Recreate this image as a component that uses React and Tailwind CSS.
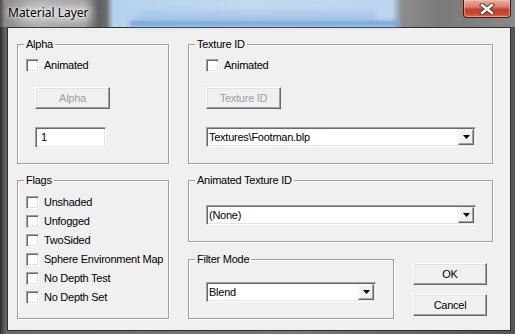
import React from "react";

const Check = ({ label }) => (
  <div className="flex items-center h-[13px] gap-[5px]">
    <span className="w-[13px] h-[13px] shrink-0 bg-white border border-t-[#a0a0a0] border-l-[#a0a0a0] border-b-white border-r-white shadow-[inset_1px_1px_0_#696969,inset_-1px_-1px_0_#e3e3e3]" />
    <span className="leading-[13px] text-black whitespace-nowrap">{label}</span>
  </div>
);

const Button = ({ children, disabled, className }) => (
  <div
    className={
      "flex items-center justify-center bg-[#f0f0f0] border border-t-white border-l-white border-b-[#696969] border-r-[#696969] shadow-[inset_-1px_-1px_0_#a0a0a0,inset_1px_1px_0_#e3e3e3] leading-[13px] whitespace-nowrap " +
      (disabled ? "text-[#a0a0a0] " : "text-black ") +
      className
    }
  >
    {children}
  </div>
);

const Combo = ({ text, className }) => (
  <div
    className={
      "flex items-center bg-white p-[1px] border border-t-[#a0a0a0] border-l-[#a0a0a0] border-b-white border-r-white shadow-[inset_1px_1px_0_#696969,inset_-1px_-1px_0_#e3e3e3] " +
      className
    }
  >
    <span className="flex-1 pl-[1px] leading-[13px] text-black whitespace-nowrap">{text}</span>
    <span className="w-[16px] h-[16px] shrink-0 flex items-center justify-center bg-[#f0f0f0] border border-t-[#f0f0f0] border-l-[#f0f0f0] border-b-[#696969] border-r-[#696969] shadow-[inset_-1px_-1px_0_#a0a0a0,inset_1px_1px_0_#fff]">
      <svg width="7" height="4" viewBox="0 0 7 4">
        <polygon points="0,0 7,0 3.5,4" fill="#000" />
      </svg>
    </span>
  </div>
);

const Group = ({ title, className, children }) => (
  <div
    className={
      "relative border border-[#a0a0a0] shadow-[inset_1px_1px_0_#fff,1px_1px_0_#fff] " +
      className
    }
  >
    <span className="absolute -top-[7px] left-[6px] px-[2px] bg-[#f0f0f0] leading-[13px] text-black whitespace-nowrap">
      {title}
    </span>
    {children}
  </div>
);

export default function App() {
  return (
    <div className="w-[515px] h-[334px] overflow-hidden flex flex-col bg-[linear-gradient(90deg,#2a2a2a_0px,#5a5a5a_4px,#6a6a6a_7px,#777_300px,#555_515px)] font-['Liberation_Sans',Arial,sans-serif] text-[11px] tracking-[-0.25px]">
      {/* Title bar */}
      <div className="relative h-[27px] shrink-0 flex items-start bg-[linear-gradient(90deg,#4a4a4a_0px,#8c8c8c_5px,#a9a9a9_40px,#9a9a9a_85px,#5e5e5e_98px,#6a6a6a_106px,#b6d1ec_113px,#c3daf0_250px,#bcd5ee_392px,#8c8c8c_402px,#7a7a7a_440px,#888_515px)]">
        <div className="absolute left-[140px] top-[12px] w-[235px] h-[8px] bg-[#9dbfe4] blur-[3px] opacity-70" />
        <div className="absolute left-[130px] top-[21px] w-[270px] h-[5px] bg-[#6f9fd6] blur-[2px]" />
        <div className="absolute left-[20px] top-[5px] w-[70px] h-[16px] bg-[#d8d8d8] blur-[6px] opacity-80" />
        <span className="relative pl-[8px] pt-[5px] font-['Noto_Sans',sans-serif] text-[12px] leading-[16px] tracking-normal text-black [text-shadow:0_0_6px_#fff,0_0_3px_#fff]">
          Material Layer
        </span>
        <div className="relative ml-auto mr-[4px] w-[48px] h-[18px] rounded-b-[4px] border border-t-0 border-[#4a1a12] bg-[linear-gradient(180deg,#eab1a3_0%,#d9806a_40%,#c4402a_55%,#c9472e_80%,#dd6a4c_100%)] shadow-[inset_0_0_0_1px_rgba(255,200,190,0.5)] flex items-center justify-center">
          <svg width="16" height="12" viewBox="0 0 16 12">
            <path d="M3 2 L13 10 M13 2 L3 10" stroke="#3b3b3b" strokeWidth="4.2" strokeLinecap="square" />
            <path d="M3 2 L13 10 M13 2 L3 10" stroke="#fff" strokeWidth="2.4" strokeLinecap="square" />
          </svg>
        </div>
      </div>

      {/* Client */}
      <div className="ml-[7px] w-[504px] h-[304px] border border-[#2e2e2e] bg-[#f0f0f0] flex items-start pl-[9px] pt-[16px] gap-[19px]">
        {/* Left column */}
        <div className="flex flex-col gap-[16px]">
          <Group title="Alpha" className="w-[152px] h-[120px]">
            <div className="flex flex-col items-start pl-[8px] pt-[14px]">
              <Check label="Animated" />
              <Button disabled className="ml-[9px] mt-[15px] w-[75px] h-[22px]">
                Alpha
              </Button>
              <div className="ml-[9px] mt-[18px] w-[71px] h-[21px] flex items-center bg-white pl-[5px] border border-t-[#a0a0a0] border-l-[#a0a0a0] border-b-white border-r-white shadow-[inset_1px_1px_0_#696969,inset_-1px_-1px_0_#e3e3e3] leading-[13px] text-black">
                1
              </div>
            </div>
          </Group>
          <Group title="Flags" className="w-[152px] h-[139px]">
            <div className="flex flex-col gap-[6px] pl-[8px] pt-[15px]">
              <Check label="Unshaded" />
              <Check label="Unfogged" />
              <Check label="TwoSided" />
              <Check label="Sphere Environment Map" />
              <Check label="No Depth Test" />
              <Check label="No Depth Set" />
            </div>
          </Group>
        </div>

        {/* Right column */}
        <div className="flex flex-col">
          <Group title="Texture ID" className="w-[305px] h-[120px]">
            <div className="flex flex-col items-start pl-[17px] pt-[14px]">
              <Check label="Animated" />
              <Button disabled className="mt-[15px] w-[75px] h-[22px]">
                Texture ID
              </Button>
              <Combo text="Textures\Footman.blp" className="mt-[18px] w-[270px] h-[20px]" />
            </div>
          </Group>
          <Group title="Animated Texture ID" className="mt-[16px] w-[305px] h-[62px]">
            <div className="pl-[17px] pt-[24px]">
              <Combo text="(None)" className="w-[270px] h-[20px]" />
            </div>
          </Group>
          <div className="mt-[17px] flex items-start gap-[19px]">
            <Group title="Filter Mode" className="w-[206px] h-[60px]">
              <div className="pl-[17px] pt-[22px]">
                <Combo text="Blend" className="w-[170px] h-[20px]" />
              </div>
            </Group>
            <div className="mt-[4px] flex flex-col gap-[9px]">
              <Button className="w-[74px] h-[22px]">OK</Button>
              <Button className="w-[74px] h-[22px]">Cancel</Button>
            </div>
          </div>
        </div>
      </div>
    </div>
  );
}
